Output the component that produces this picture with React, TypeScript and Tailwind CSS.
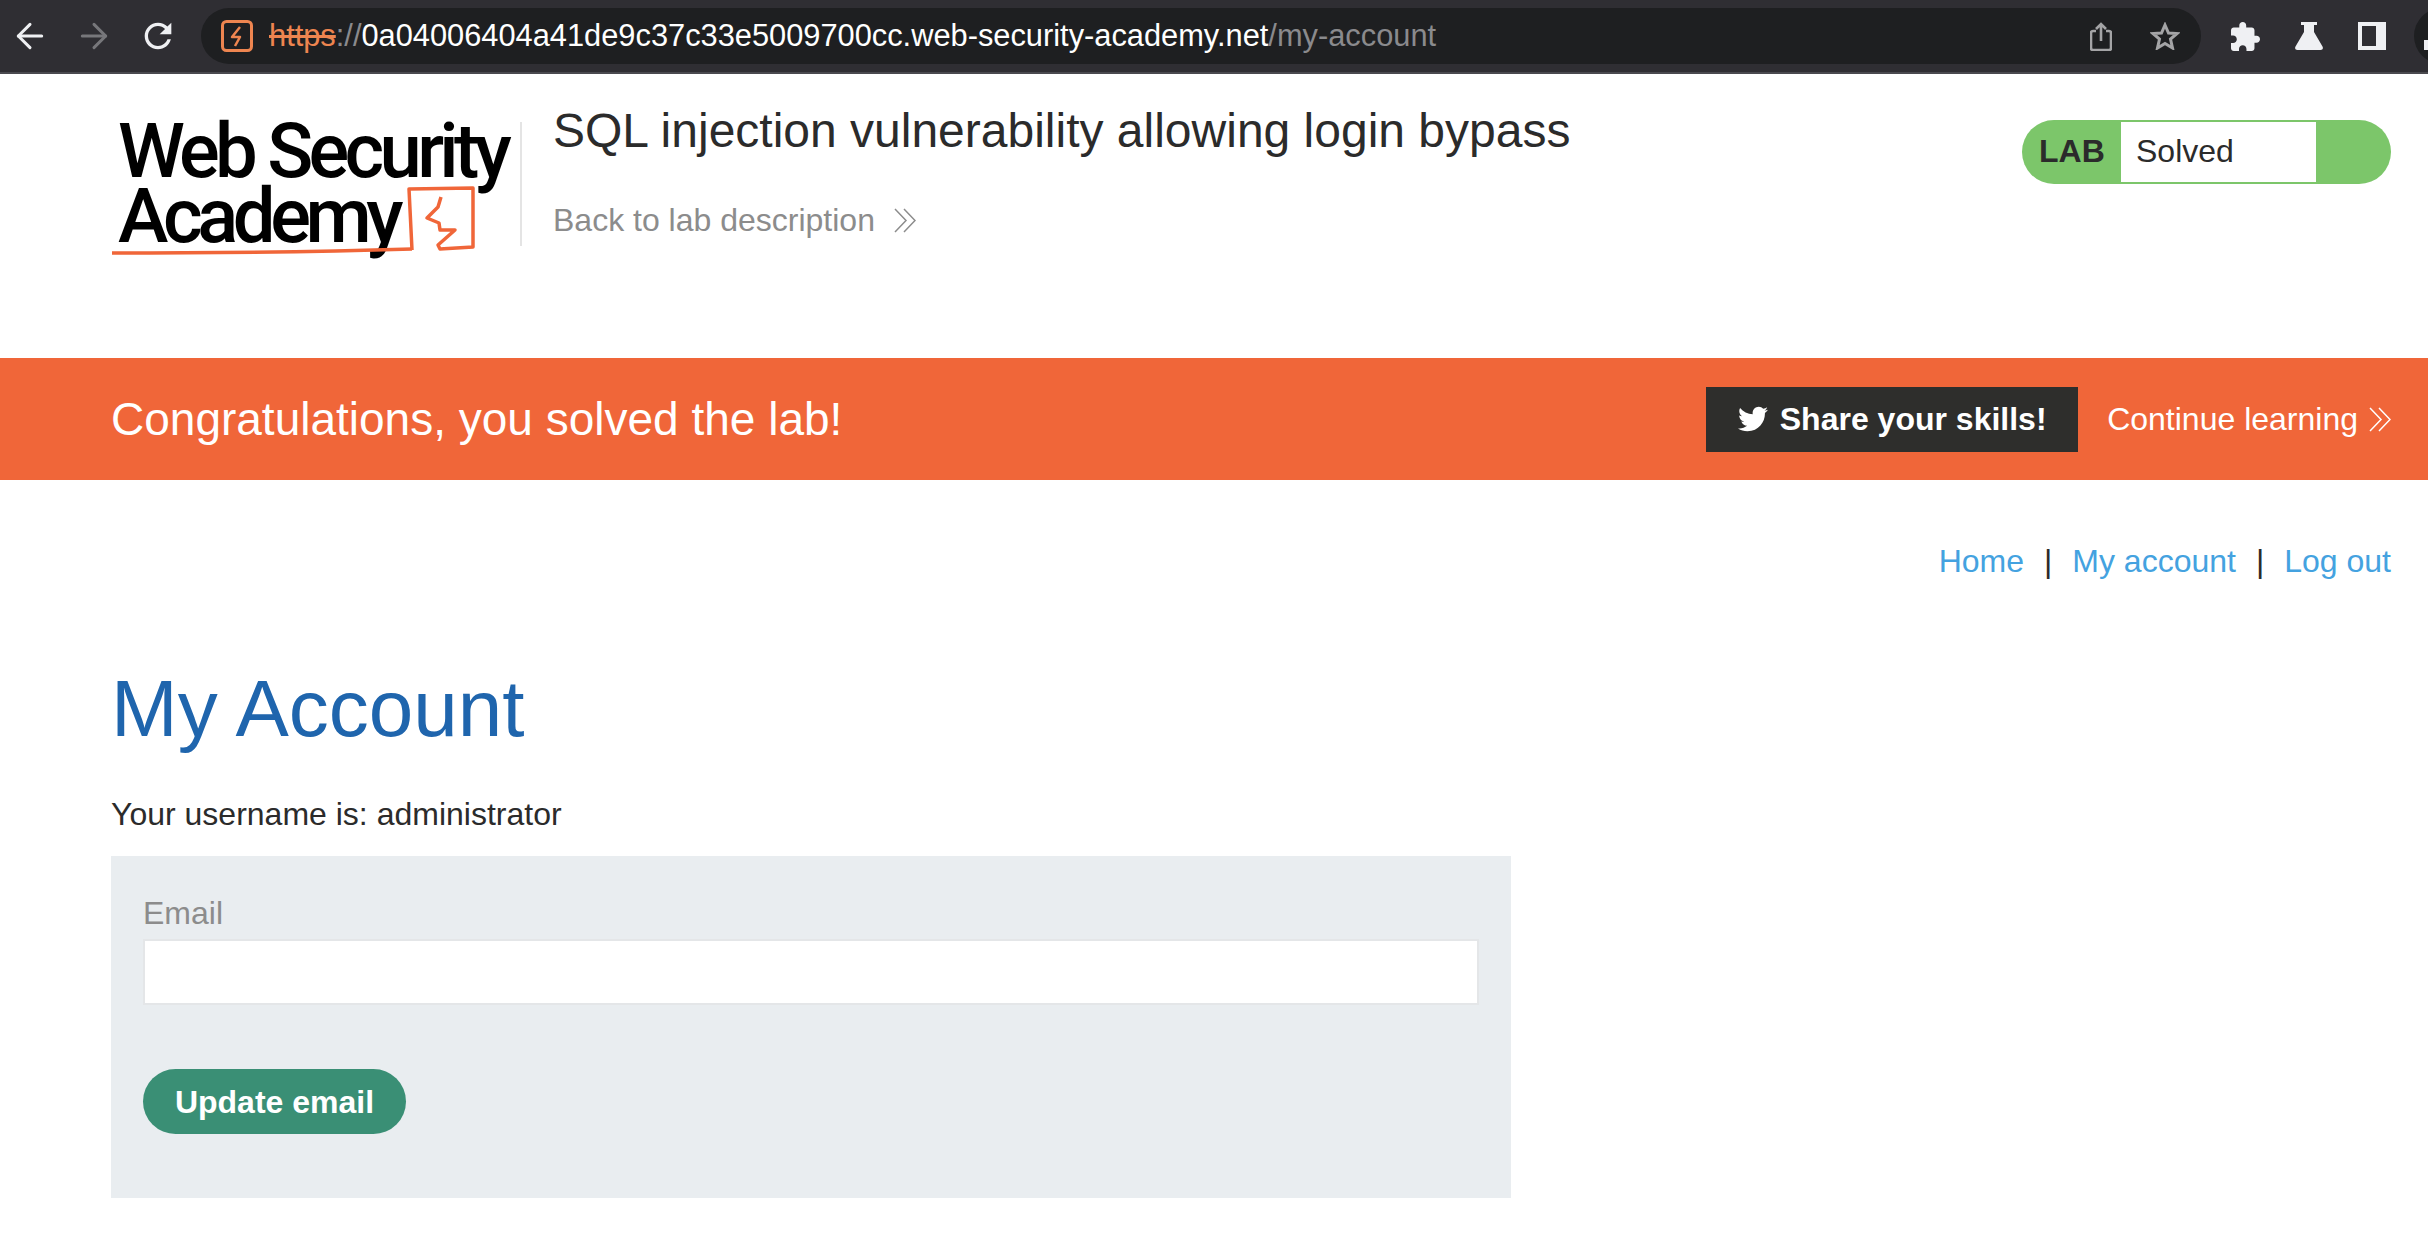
import { ArrowLeft, ArrowRight } from "lucide-react";
import { FaTwitter } from "react-icons/fa";

const arial = "font-['Liberation_Sans',Arial,sans-serif]";

function DoubleChevron({ className }: { className: string }) {
  return (
    <svg viewBox="0 0 22 25" fill="none" stroke="currentColor" strokeWidth="1.5" className={className}>
      <path d="M1 1l11 11.5L1 24" />
      <path d="M10 1l11 11.5L10 24" />
    </svg>
  );
}

function BrowserBar() {
  return (
    <div className="flex h-[74px] items-center overflow-hidden border-b-2 border-[#4a4a4f] bg-[#2f2e33] pl-[10px]">
      <ArrowLeft className="h-[40px] w-[40px] shrink-0 text-[#eff0f3]" strokeWidth={1.8} />
      <ArrowRight className="ml-[24px] h-[40px] w-[40px] shrink-0 text-[#77777b]" strokeWidth={1.8} />
      <svg viewBox="0 0 24 24" className="ml-[24px] h-[40px] w-[40px] shrink-0 fill-[#eff0f3]">
        <path d="M17.65 6.35C16.2 4.9 14.21 4 12 4c-4.42 0-7.99 3.58-7.99 8s3.57 8 7.99 8c3.73 0 6.84-2.55 7.73-6h-2.08c-.82 2.33-3.04 4-5.65 4-3.31 0-6-2.69-6-6s2.69-6 6-6c1.66 0 3.14.69 4.22 1.78L13 11h7V4l-2.35 2.35z" />
      </svg>
      <div className="ml-[23px] flex h-[56px] w-[2000px] shrink-0 items-center rounded-full bg-[#1e1f21] pl-[20px] pr-[21px]">
        <svg viewBox="0 0 32 32" className="h-[32px] w-[32px] shrink-0" fill="none" stroke="#ee8550" strokeWidth="3">
          <rect x="1.5" y="1.5" width="29" height="29" rx="4" />
          <path d="M19 7l-8 10h8l-5 9" strokeWidth="2.5" strokeLinejoin="round" />
        </svg>
        <p className={`ml-[16px] flex-1 text-[30.8px] leading-none text-white ${arial}`}>
          <span className="text-[#ee8550] line-through">https</span>
          <span className="text-[#8a8a8d]">://</span>
          0a04006404a41de9c37c33e5009700cc.web-security-academy.net
          <span className="text-[#8a8a8d]">/my-account</span>
        </p>
        <svg viewBox="0 0 22 29" className="h-[29px] w-[22px] shrink-0" fill="none" stroke="#a4a4a6" strokeWidth="2.6">
          <path d="M6 9H3a2 2 0 0 0-2 2v15a2 2 0 0 0 2 2h16a2 2 0 0 0 2-2V11a2 2 0 0 0-2-2h-3" />
          <path d="M11 19V2M6 7l5-5 5 5" />
        </svg>
        <svg viewBox="0 0 30 28" className="ml-[38px] h-[28px] w-[30px] shrink-0" fill="none" stroke="#a4a4a6" strokeWidth="3">
          <path d="M15 3L18.500 11L27 11.500L20.500 17L22.500 26L15 21.500L7.500 26L9.500 17L3 11.500L11.500 11Z" />
        </svg>
      </div>
      <svg viewBox="2 1 21 21" className="ml-[30px] h-[29px] w-[29px] shrink-0 fill-[#eff0f3]">
        <path d="M20.5 11H19V7c0-1.1-.9-2-2-2h-4V3.5C13 2.12 11.88 1 10.5 1S8 2.12 8 3.5V5H4c-1.1 0-1.99.9-1.99 2v3.8H3.5c1.49 0 2.7 1.21 2.7 2.7s-1.21 2.7-2.7 2.7H2V20c0 1.1.9 2 2 2h3.8v-1.5c0-1.49 1.21-2.7 2.7-2.7 1.49 0 2.7 1.21 2.7 2.7V22H17c1.1 0 2-.9 2-2v-4h1.5c1.38 0 2.5-1.12 2.5-2.5S21.88 11 20.5 11z" />
      </svg>
      <svg viewBox="0 0 28 28" className="ml-[35px] h-[28px] w-[28px] shrink-0 fill-[#eff0f3]">
        <path d="M6 0h16v3h-3v7l8.500 14.500C28.500 26.500 27.500 28 25.500 28h-23C.5 28-.5 26.500.5 24.500L9 10V3H6z" />
      </svg>
      <div className="ml-[35px] flex h-[28px] w-[28px] shrink-0 justify-end border-[4px] border-[#eff0f3]">
        <div className="h-full w-[6px] bg-[#eff0f3]" />
      </div>
      <div className="ml-[28px] flex h-[56px] w-[56px] shrink-0 items-end rounded-full bg-[#1e1f21] pb-[14px] pl-[10px]">
        <div className="h-[10px] w-[4px] bg-[#eff0f3]" />
      </div>
    </div>
  );
}

function Logo() {
  return (
    <div className="relative h-[144px] w-[396px] shrink-0 pl-[7px] font-['Roboto',sans-serif] text-black">
      <div className="-mt-[3px]">
        <p className="whitespace-nowrap text-[76px] font-medium leading-[65px] tracking-[-4.7px]">Web Security</p>
        <p className="whitespace-nowrap text-[76px] font-medium leading-[65px] tracking-[-5.4px]">Academy</p>
      </div>
      <svg viewBox="0 0 396 144" className="absolute left-0 top-0 h-[144px] w-[396px]" fill="none" stroke="#f06639" strokeWidth="3.500">
        <path d="M1 131C100 131 200 130 301 127" />
        <path d="M301 128L298 67L362 66L362 125L329 127L327 123L344 108L329 108L328 101L316 96L327 85L330 75" strokeLinejoin="round" />
      </svg>
    </div>
  );
}

export default function App() {
  return (
    <div className={`min-h-[1248px] overflow-hidden bg-white ${arial}`}>
      <BrowserBar />
      <header className="flex h-[284px] items-start px-[111px]">
        <div className="mt-[48px] flex">
          <Logo />
          <div className="ml-[13px] h-[124px] w-[2px] bg-[#e4e4e4]" />
        </div>
        <div className="ml-[31px] mt-[27px] flex-1">
          <h2 className="text-[48px] leading-[60px] text-[#2b2b2b]">SQL injection vulnerability allowing login bypass</h2>
          <p className="mt-[39px] flex items-center text-[32px] leading-[40px] text-[#8c8c8c]">
            Back to lab description
            <DoubleChevron className="ml-[19px] h-[25px] w-[22px]" />
          </p>
        </div>
        <div className="mr-[-74px] mt-[46px] flex h-[64px] w-[369px] rounded-full bg-[#7cc66a] pl-[17px]">
          <span className="flex w-[82px] items-center pb-[3px] text-[32px] font-bold text-[#2b2b2b]">LAB</span>
          <span className="my-[2px] flex w-[195px] items-center bg-white pb-[3px] pl-[15px] text-[32px] text-[#2b2b2b]">Solved</span>
        </div>
      </header>
      <div className="flex h-[122px] items-center bg-[#f06639] pl-[111px] pr-[37px] text-white">
        <h4 className="flex-1 text-[46px]">Congratulations, you solved the lab!</h4>
        <button className="flex h-[65px] w-[372px] items-center justify-center bg-[#2e2e2c] text-[32px] font-bold">
          <FaTwitter className="mr-[12px] h-[30px] w-[30px]" />
          Share your skills!
        </button>
        <span className="ml-[29px] text-[32px]">Continue learning</span>
        <DoubleChevron className="ml-[11px] h-[25px] w-[22px]" />
      </div>
      <main className="px-[111px]">
        <nav className="mr-[-74px] mt-[61px] flex justify-end text-[32px] leading-[40px] text-[#2b2b2b]">
          <a className="text-[#44a2e0]">Home</a>
          <span className="mx-[20px]">|</span>
          <a className="text-[#44a2e0]">My account</a>
          <span className="mx-[20px]">|</span>
          <a className="text-[#44a2e0]">Log out</a>
        </nav>
        <h1 className="mt-[80px] text-[80px] leading-[96px] text-[#1f65ad]">My Account</h1>
        <p className="mt-[37px] text-[32px] leading-[40px] text-[#2b2b2b]">Your username is: administrator</p>
        <section className="mt-[22px] h-[342px] w-[1400px] bg-[#e9edf0] px-[32px] pt-[37px]">
          <label className="block text-[32px] leading-[40px] text-[#8c8c8c]">Email</label>
          <input className="mt-[6px] block h-[66px] w-[1336px] border-2 border-[#e4e6e8] bg-white" />
          <button className="mt-[64px] h-[65px] w-[263px] rounded-full bg-[#3a8f75] text-[32px] font-bold text-white">Update email</button>
        </section>
      </main>
    </div>
  );
}
